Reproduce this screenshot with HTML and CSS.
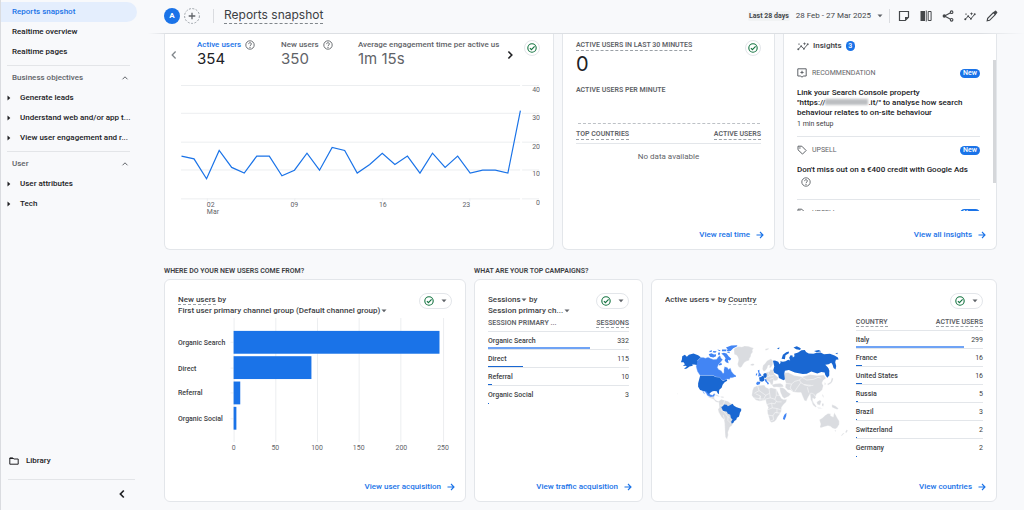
FILE: index.html
```html
<!DOCTYPE html>
<html lang="en">
<head>
    <meta charset="UTF-8">
    <meta name="viewport" content="width=device-width, initial-scale=1.0">
    <title>Reports snapshot</title>
    <link rel="stylesheet" href="styles.css">
</head>
<body>
    <!-- shared icons -->
    <svg class="sprite" aria-hidden="true">
        <symbol id="i-caret" viewBox="0 0 6 4"><path d="M0.5 0.5h5L3 3.2z" fill="currentColor"/></symbol>
        <symbol id="i-tri" viewBox="0 0 4 6"><path d="M0.5 0.6v4.8L3.3 3z" fill="currentColor"/></symbol>
        <symbol id="i-up" viewBox="0 0 8 8"><path d="M1.5 5.3L4 2.8l2.5 2.5" fill="none" stroke="currentColor"/></symbol>
        <symbol id="i-left" viewBox="0 0 8 10"><path d="M5.6 1.5L2.2 5l3.4 3.5" fill="none" stroke="currentColor" stroke-width="1.3"/></symbol>
        <symbol id="i-right" viewBox="0 0 8 10"><path d="M2.4 1.5L5.8 5 2.4 8.5" fill="none" stroke="currentColor" stroke-width="1.6"/></symbol>
        <symbol id="i-arrow" viewBox="0 0 8 8"><path d="M0.5 4h6.3M4 1l3 3-3 3" fill="none" stroke="currentColor" stroke-width="1.1"/></symbol>
        <symbol id="i-help" viewBox="0 0 10 10"><circle cx="5" cy="5" r="4.2" fill="none" stroke="currentColor" stroke-width="0.9"/><path d="M3.6 4.1c0-1.9 2.8-1.8 2.8-0.1C6.4 5 5 5.1 5 6.1" fill="none" stroke="currentColor" stroke-width="0.9"/><circle cx="5" cy="7.4" r="0.55" fill="currentColor"/></symbol>
        <symbol id="i-check" viewBox="0 0 10 10"><circle cx="5" cy="5" r="4.2" fill="none" stroke="#137340" stroke-width="1.1"/><path d="M2.9 5.2l1.5 1.5 3.2-3.4" fill="none" stroke="#137340" stroke-width="1.1"/></symbol>
        <symbol id="i-insight" viewBox="0 0 12 12"><path d="M1.2 9.3L4.2 6.2l2.7 2.6 3.9-4.6" fill="none" stroke="currentColor" stroke-width="1"/><g fill="currentColor"><circle cx="1.3" cy="9.2" r="1"/><circle cx="4.2" cy="6.2" r="1"/><circle cx="6.9" cy="8.7" r="1"/><circle cx="10.7" cy="4.2" r="1"/><path d="M7.5 2l0.5 1.2 1.2 0.5L8 4.2 7.5 5.4 7 4.2 5.8 3.7 7 3.2zM2 3l0.3 0.8 0.8 0.3-0.8 0.3L2 5.2l-0.3-0.8-0.8-0.3 0.8-0.3z"/></g></symbol>
        <symbol id="i-tag" viewBox="0 0 10 10"><path d="M1 1.2h3.8L9.1 5.5 5.5 9.1 1 4.8z" fill="none" stroke="currentColor" stroke-linejoin="round"/><circle cx="2.9" cy="3" r="0.7" fill="currentColor"/></symbol>
    </svg>

    <div class="app">
        <nav class="sidebar">
            <a href="#" class="nav-item active">Reports snapshot</a>
            <a href="#" class="nav-item">Realtime overview</a>
            <a href="#" class="nav-item">Realtime pages</a>
            <hr>
            <button type="button" class="nav-group">Business objectives <svg class="ico-8"><use href="#i-up"/></svg></button>
            <a href="#" class="nav-item sub"><svg class="tri"><use href="#i-tri"/></svg>Generate leads</a>
            <a href="#" class="nav-item sub"><svg class="tri"><use href="#i-tri"/></svg>Understand web and/or app t...</a>
            <a href="#" class="nav-item sub"><svg class="tri"><use href="#i-tri"/></svg>View user engagement and r...</a>
            <hr>
            <button type="button" class="nav-group">User <svg class="ico-8"><use href="#i-up"/></svg></button>
            <a href="#" class="nav-item sub"><svg class="tri"><use href="#i-tri"/></svg>User attributes</a>
            <a href="#" class="nav-item sub"><svg class="tri"><use href="#i-tri"/></svg>Tech</a>
            <div class="sidebar-bottom">
                <a href="#" class="nav-item library">
                    <svg class="ico-10" viewBox="0 0 10 10"><path d="M0.8 2h3l1 1h4.4v5.2H0.8z" fill="none" stroke="currentColor" stroke-linejoin="round"/><path d="M0.8 1.8h3l1 1.2h-4z" fill="currentColor"/></svg>
                    Library
                </a>
                <hr>
                <button type="button" class="collapse" aria-label="Collapse menu"><svg viewBox="0 0 8 10"><path d="M5.8 1.5L2.4 5l3.4 3.5" fill="none" stroke="currentColor" stroke-width="1.7"/></svg></button>
            </div>
        </nav>

        <main class="main">
            <header class="topbar">
                <span class="avatar">A</span>
                <button type="button" class="add" aria-label="Add comparison">
                    <svg viewBox="0 0 16 16"><circle cx="8" cy="8" r="7.4" fill="none" stroke="#9aa0a6" stroke-dasharray="2 1.5"/><path d="M8 4.7v6.6M4.7 8h6.6" stroke="#5f6368" stroke-width="1.3"/></svg>
                </button>
                <span class="sep"></span>
                <h1>Reports snapshot</h1>
                <div class="tools">
                    <button type="button" class="date">
                        <span class="range-tag">Last 28 days</span>
                        28 Feb - 27 Mar 2025
                        <svg class="caret"><use href="#i-caret"/></svg>
                    </button>
                    <span class="sep"></span>
                    <button type="button" aria-label="Notes"><svg viewBox="0 0 12 12"><path d="M1.5 1.5h9v5.8l-3.2 3.2H1.5z" fill="none" stroke="currentColor" stroke-width="1.2"/><path d="M7 10.5V7h3.7z" fill="currentColor"/></svg></button>
                    <button type="button" aria-label="Compare"><svg viewBox="0 0 12 12"><path d="M0.5 1h4.5v10H0.5zM5.8 0.5h0.9v11h-0.9z" fill="currentColor"/><path d="M8.2 1.5h2.9v9H8.2z" fill="none" stroke="currentColor"/></svg></button>
                    <button type="button" aria-label="Share"><svg viewBox="0 0 12 12"><path d="M9.5 2.2L2.5 6l7 3.8" fill="none" stroke="currentColor" stroke-width="1.1"/><g fill="#f8f9fb" stroke="currentColor" stroke-width="1.1"><circle cx="9.6" cy="2.2" r="1.3"/><circle cx="9.6" cy="9.8" r="1.3"/></g><circle cx="2.3" cy="6" r="1.7" fill="currentColor"/></svg></button>
                    <button type="button" aria-label="Insights"><svg><use href="#i-insight"/></svg></button>
                    <button type="button" aria-label="Edit"><svg viewBox="0 0 12 12"><path d="M1.2 10.8l0.5-2.4 5.7-5.7 1.9 1.9-5.7 5.7z" fill="none" stroke="currentColor" stroke-width="1.2"/><path d="M7.2 2.4L9 0.8q0.5-0.4 1 0l1.2 1.2q0.4 0.5 0 1L9.5 4.8z" fill="currentColor"/></svg></button>
                </div>
            </header>

            <section class="row row-top">
                <article class="card cut overview">
                    <div class="metrics">
                        <button type="button" class="step prev" aria-label="Previous"><svg><use href="#i-left"/></svg></button>
                        <div class="metric selected">
                            <span class="metric-name">Active users <svg class="ico-10"><use href="#i-help"/></svg></span>
                            <span class="metric-value">354</span>
                        </div>
                        <div class="metric">
                            <span class="metric-name">New users <svg class="ico-10"><use href="#i-help"/></svg></span>
                            <span class="metric-value">350</span>
                        </div>
                        <div class="metric last">
                            <span class="metric-name">Average engagement time per active us</span>
                            <span class="metric-value">1m 15s</span>
                        </div>
                        <button type="button" class="step next" aria-label="Next"><svg><use href="#i-right"/></svg></button>
                        <button type="button" class="status" aria-label="Data quality"><svg class="ico-10"><use href="#i-check"/></svg></button>
                    </div>
                    <svg class="chart" viewBox="177 80 364 138">
                        <path class="grid" d="M180 85.5h341m2 0h17M180 113.5h341m2 0h17M180 142.5h341m2 0h17M180 170.5h341m2 0h17M180 199.5h341m2 0h17M206.5 199v3M294.5 199v3M382.5 199v3M470.5 199v3"/>
                        <polyline class="line" points="180.5,156.5 193.1,159.3 205.7,179.3 218.4,150.8 231,167.9 243.6,173.6 256.2,156.5 268.8,156.5 281.5,176.4 294.1,170.7 306.7,153.6 319.3,170.7 332,147.9 344.6,150.8 357.2,173.6 369.8,165 382.4,153.6 395.1,165 407.7,156.5 420.3,173.6 432.9,153.6 445.6,167.9 458.2,156.5 470.8,173.6 483.4,170.7 496,170.7 508.7,173.6 521.3,110.9"/>
                        <g class="tick" text-anchor="end">
                            <text x="541" y="92">40</text>
                            <text x="541" y="120">30</text>
                            <text x="541" y="149">20</text>
                            <text x="541" y="177">10</text>
                            <text x="541" y="206">0</text>
                        </g>
                        <g class="tick">
                            <text x="206" y="208">02</text>
                            <text x="206" y="215">Mar</text>
                            <text x="290" y="208">09</text>
                            <text x="379" y="208">16</text>
                            <text x="463" y="208">23</text>
                        </g>
                    </svg>
                </article>

                <article class="card cut realtime">
                    <div class="card-head">
                        <h2 class="caps dashed">Active users in last 30 minutes</h2>
                        <button type="button" class="status" aria-label="Data quality"><svg class="ico-10"><use href="#i-check"/></svg></button>
                    </div>
                    <p class="big">0</p>
                    <h3 class="caps">Active users per minute</h3>
                    <div class="minutes"></div>
                    <div class="list-head">
                        <span class="caps dashed">Top countries</span>
                        <span class="caps dashed">Active users</span>
                    </div>
                    <p class="empty">No data available</p>
                    <a href="#" class="more">View real time <svg class="ico-8"><use href="#i-arrow"/></svg></a>
                </article>

                <article class="card cut insights">
                    <h2 class="insights-title"><svg class="ico-12"><use href="#i-insight"/></svg> Insights <span class="count">3</span></h2>
                    <div class="feed">
                        <div class="insight">
                            <div class="insight-type">
                                <svg class="ico-10" viewBox="0 0 10 10"><path d="M0.8 0.8h8.4v7.2H6.2L5 9.3 3.8 8h-3z" fill="none" stroke="currentColor" stroke-linejoin="round"/><path d="M5 2.2l0.6 1.6 1.6 0.6-1.6 0.6L5 6.6l-0.6-1.6-1.6-0.6 1.6-0.6z" fill="currentColor"/></svg>
                                RECOMMENDATION <span class="new">New</span>
                            </div>
                            <p class="insight-text">Link your Search Console property<br>"https://<span class="redacted"></span>.it/" to analyse how search behaviour relates to on-site behaviour</p>
                            <p class="insight-note">1 min setup</p>
                        </div>
                        <div class="insight">
                            <div class="insight-type"><svg class="ico-10"><use href="#i-tag"/></svg> UPSELL <span class="new">New</span></div>
                            <p class="insight-text">Don't miss out on a €400 credit with Google Ads</p>
                            <svg class="ico-10 insight-help"><use href="#i-help"/></svg>
                        </div>
                        <div class="insight">
                            <div class="insight-type"><svg class="ico-10"><use href="#i-tag"/></svg> UPSELL <span class="new">New</span></div>
                        </div>
                        <span class="scrollbar"></span>
                    </div>
                    <a href="#" class="more">View all insights <svg class="ico-8"><use href="#i-arrow"/></svg></a>
                </article>
            </section>

            <section class="row row-bottom">
                <h2 class="section-title">Where do your new users come from?</h2>
                <h2 class="section-title">What are your top campaigns?</h2>
                <span></span>

                <article class="card">
                    <div class="card-head">
                        <div class="card-title">
                            <div><span class="dashed">New users</span> by</div>
                            <label class="picker"><select aria-label="Dimension"><option>First user primary channel group (Default channel group)</option></select><svg class="caret"><use href="#i-caret"/></svg></label>
                        </div>
                        <button type="button" class="status wide" aria-label="Data quality"><svg class="ico-10"><use href="#i-check"/></svg><svg class="caret"><use href="#i-caret"/></svg></button>
                    </div>
                    <svg class="chart" viewBox="177 316 276 138">
                        <path class="grid" d="M233.5 318v125M275.5 318v125M317.5 318v125M359.5 318v125M401.5 318v125M444.5 318v125M230 342.5h3M230 368.5h3M230 393.5h3M230 419.5h3"/>
                        <g class="bar">
                            <rect x="233" y="331" width="207.4" height="23"/>
                            <rect x="233" y="356.5" width="78.4" height="23"/>
                            <rect x="233" y="382" width="6.7" height="23"/>
                            <rect x="233" y="407.5" width="2.8" height="23"/>
                        </g>
                        <g class="bar-label">
                            <text x="177" y="345">Organic Search</text>
                            <text x="177" y="371">Direct</text>
                            <text x="177" y="396">Referral</text>
                            <text x="177" y="422">Organic Social</text>
                        </g>
                        <g class="tick" text-anchor="middle">
                            <text x="233" y="451">0</text>
                            <text x="275" y="451">50</text>
                            <text x="317" y="451">100</text>
                            <text x="359" y="451">150</text>
                            <text x="402" y="451">200</text>
                            <text x="444" y="451">250</text>
                        </g>
                    </svg>
                    <a href="#" class="more">View user acquisition <svg class="ico-8"><use href="#i-arrow"/></svg></a>
                </article>

                <article class="card">
                    <div class="card-head">
                        <div class="card-title">
                            <div><label class="picker"><select aria-label="Metric"><option>Sessions</option></select><svg class="caret"><use href="#i-caret"/></svg></label> by</div>
                            <label class="picker"><select aria-label="Dimension"><option>Session primary ch...</option></select><svg class="caret"><use href="#i-caret"/></svg></label>
                        </div>
                        <button type="button" class="status wide" aria-label="Data quality"><svg class="ico-10"><use href="#i-check"/></svg><svg class="caret"><use href="#i-caret"/></svg></button>
                    </div>
                    <table class="data">
                        <thead><tr><th>Session primary ...</th><th><span class="dashed">Sessions</span></th></tr></thead>
                        <tbody>
                            <tr><td>Organic Search<i class="meter soft" style="width: 72%"></i></td><td>332</td></tr>
                            <tr><td>Direct<i class="meter" style="width: 25%"></i></td><td>115</td></tr>
                            <tr><td>Referral<i class="meter" style="width: 2.5%"></i></td><td>10</td></tr>
                            <tr><td>Organic Social<i class="meter" style="width: 0.7%"></i></td><td>3</td></tr>
                        </tbody>
                    </table>
                    <a href="#" class="more">View traffic acquisition <svg class="ico-8"><use href="#i-arrow"/></svg></a>
                </article>

                <article class="card">
                    <div class="card-head">
                        <div class="card-title">
                            <div><label class="picker"><select aria-label="Metric"><option>Active users</option></select><svg class="caret"><use href="#i-caret"/></svg></label> by <span class="dashed">Country</span></div>
                        </div>
                        <button type="button" class="status wide" aria-label="Data quality"><svg class="ico-10"><use href="#i-check"/></svg><svg class="caret"><use href="#i-caret"/></svg></button>
                    </div>
                    <div class="geo">
                        <svg class="map" viewBox="-18 0 552 345" role="img" aria-label="Active users by country">
                            <!-- countries without data -->
                            <g fill="#dadce0" stroke="#fff" stroke-width="1">
                                <path d="M190 48l6-4 9-3 9 1 8-3 12 1 8 3 8 2-4 6 1 6-5 7-1 7-4 6-1 6-8 2-6 4-4 5-4 8-5 3-5-3-3-8 2-8 1-6-2-7-3-5-8-4z"/>
                                <path d="M240 94l8-2 4 3-4 4-7-1z"/>
                                <path d="M112 190l10 4 8-2 2 8 8 5 8 1-3 4-9-2-8-8-14-5zM130 184l10 3 8 5-6 0-10-5zM150 192l8 0 2 4-9-1z"/>
                                <path d="M144 206l8-6 6 2 14 4 8 6 8 4 6 6 18 8-4 14-8 10-2 8-10 8-4 10-6 4-2 6-4 10 1 8-3 11 4 2-6-1-4-7-1-16-1-24-2-12-8-8-8-14-2-8 4-6z"/>
                                <path d="M276 108l2-10 6-6 6-8 12-6 6 6-1 12-5 8-5 2 1-9-5 1-2 8-6 8-4 2-4-4z"/>
                                <path d="M280 126l10-8 8-2 2-6 10 2 2 12 12 10-2 8-6 2-6 0-2 8 0 6-6-2-4-8-8-4-6-8z"/>
                                <path d="M304 156l12-3 14-1 8 4 2 6-12 2-10-1-8 1z"/>
                                <path d="M250 164l10-5 12-1 10-1 4 7 10 4 6-3 16 4 4 8 6 12 6 9 6 3 10-1-2 8-8 8-6 8-1 12-5 10-6 8-4 8-6 6-8 2-5-3-3-12-4-12-1-10 3-8-6-12-2-10-6 0-12 3-12-4-8-8-4-6 2-14z"/>
                                <path d="M328 164l10 1 6 4 8 9 10 6-6 7-14 7-6-6-6-14z"/>
                                <path d="M340 132l-2-6 6-6 10-1 18 9 24 4 24-7 20 3 22-1 6 10-8 6-4 8 4 8-3 12-8 8-9 5-3 8-5-6-7-4-6 4-6 10-4 10-6-2-6-14-4-10-10 0-14-2-8-6-8 0-8-8 2-14z"/>
                                <path d="M420 182l8 0 4 4 6 8-4 6-6-4 0 8 4 8-4 0-6-10z"/>
                                <path d="M424 206l8 6 8 10-3 2-8-6zM440 208l10-6 4 4-4 12-8-2zM440 224l12 2 6 2-12 0zM456 212l6 2-2 8-4-2zM486 216l10 4 10 8-4 3-8-3-8-4zM456 184l4 4 2 8-4-4z"/>
                                <path d="M486 134l4 4-2 8-4 6-10 6-2-4 10-6zM464 148l4 6-4 4z"/>
                                <path d="M448 262l10-6 8-8 8-5 8 1 0 6 8 4 3-14 5 8 4 8 6 10 0 10-6 10-6 4-8-2-6-6-8-2-14 4-8 3-2-4 2-8z"/>
                                <path d="M494 294l5 0-2 5zM530 292l4 2-4 8-4-2zM524 302l-8 8-3 0 7-8z"/>
                                <path d="M284 48l12-3-2 5-8 3zM18 182l4 2-2 1z"/>
                            </g>
                            <g fill="none" stroke="#fff" stroke-width="1.5">
                                <path d="M262 160l4 14-14 8M266 174l20 14 12-6-2-14M286 188l-6 12-30-4M298 182l2 14-16 4 2 12M318 170v18h14M318 188l-4 12-14-4M314 200l6 8 14 0M290 216l14-4 10 2 4-8M304 212l2 14-14 6M306 226l14 2 12 4M292 248l16 2 6-10 16 2M308 250l2 12-10 4M320 228v14M270 190l-2 20M256 184l14 6-2 8"/>
                                <path d="M344 152l20 2 10-8 14-4 8-8M388 142l4 8 10 6 14 4 14-2M392 150l-10 14-8 12M364 154l-4 12 8 10M402 156l20 2M396 134l14 8 20-2 14-6 10 2M412 164l4 16M148 218l10 0 4-14M150 232l10 6 10 12 8 8M162 262l-4-14M172 252l0 12 10 10"/>
                                <path d="M292 116l6 14-12 4M298 130l12-2M298 140l12-4M310 140v10"/>
                            </g>
                            <!-- few users -->
                            <g fill="#4285f4" stroke="#a8c7fa" stroke-width="1">
                                <path d="M90 74l8 0 6 2 8-3 8 4 8 3 10-1 4-6 6-5 3 8 5 4-6 8-6 6-4 10 4 6 8 4 5 8 3-2 0-10 2-8 8 2 4 6 5-4 4 10 6 8 4 8-8 3-6 0-2 5-8-1-9 5-8-3-4-7-14-2-6-4H88l-8-12-4-14 2-16z"/>
                                <path d="M96 165l12 3 6 8 4 10 8 2 4-5 3 2-3 7-10 1-10-4-4-8-8-8-2 0 6 11-3-2-6-12z"/>
                            </g>
                            <g fill="#4285f4">
                                <path d="M114 64l8-3 8 4 6-1 0 6-8 4-10-2zM116 54l8-2 0 4-7 2zM128 54l10 1-4 5-8-2zM142 60l6-1 0 6-5 2zM140 50l10 2-4 3zM152 62l8-2 8 2 6 8 8 8-4 5-6-2 2 10-8-3-4-6 3-6-6-8zM154 50l14 0-2 5-12 0zM166 44l16-6 18-1 0 3-12 6-8 8-12 1 3-6zM144 94l8-4 2 6-8 2zM188 124l8 4 0 5-8-2zM168 58l8-2 2 5z"/>
                                <path d="M340 252l3-6 6-5-1 10-5 12-5-3zM282 139l6 1 2 6 6 6-3 4-4-6-5-5zM260 147l10 0-2 8-8 2-3-4zM262 113l5-2 0 8 5 6 1 5-10 1 2-8zM257 122l4 0-2 6-3 0z"/>
                            </g>
                            <!-- most users -->
                            <g fill="#1967d2">
                                <path d="M34 70l8-4 6 6 6-6 14-4 14 5 8 6-10 10-2 14-8-2-6 0 2 4-10 2-8 6-6 2-2-2 8-6-4-2-8 1 6-6-4-6-8 0 3-8z"/>
                                <path d="M88 129h40l6 4 14 1 4 7 6 4 10-5 2 4-8 5-6 7-3 9-7 6-1 7 0 7-4-3-3-6-8-1-6 2-6 4-4 3-8-9-8 0-10-3-6-10 0-10z"/>
                                <path d="M152 224l6-4 2-4 8 1 4 4 6-3 8-4 4 6 8 4 14 5 0 6-4 6-1 6-2 6-6 3-2 6-6 4-3 6-5 1-1-6 4-6-5-4-2-10-8-4-2-5-12-3z"/>
                                <path d="M266 134l6-1 4-4 6 5-1 10-6 3-7-2zM279 124l5-3 5 2 0 8-4 5-6-3z"/>
                                <path d="M308 84l6-1 10 4 4 7 3-4-1-5 8 2 8-2 8-4 6 2-3-8 4-8 6 1 1 6 5-4-1-7 12-4 10-7 10-1 4 6 8 5 14 1 10-3 12-1 10 5 18-1 14 5 10 6 2 6-8 1-2 7 3 12-2 10-6-4-3-10-4-6-8 4-10 2 8 8 4 10 0 14-6 7-6-8-2-8-10-1-12 4-18-6-14 7-12 1-24-5-18-7-12 2-2 10 2 16-4 3-14-7-2-10-12-6-3-8 3-11z"/>
                                <path d="M334 78l4-12 10-8 8-2 0 5-10 6-2 12zM320 46l8-2-2 5zM370 44l10-4 12 6-2 5-12-2zM432 54l14-3 8 4-14 3zM496 62l8-2-2 4zM474 104l4 10-2 10z"/>
                            </g>
                        </svg>
                        <table class="data">
                            <thead><tr><th><span class="dashed">Country</span></th><th><span class="dashed">Active users</span></th></tr></thead>
                            <tbody>
                                <tr><td>Italy<i class="meter soft" style="width: 85%"></i></td><td>299</td></tr>
                                <tr><td>France<i class="meter" style="width: 5%"></i></td><td>16</td></tr>
                                <tr><td>United States<i class="meter" style="width: 5%"></i></td><td>16</td></tr>
                                <tr><td>Russia<i class="meter" style="width: 1.5%"></i></td><td>5</td></tr>
                                <tr><td>Brazil<i class="meter" style="width: 1%"></i></td><td>3</td></tr>
                                <tr><td>Switzerland<i class="meter" style="width: 0.8%"></i></td><td>2</td></tr>
                                <tr><td>Germany<i class="meter" style="width: 0.8%"></i></td><td>2</td></tr>
                            </tbody>
                        </table>
                    </div>
                    <a href="#" class="more">View countries <svg class="ico-8"><use href="#i-arrow"/></svg></a>
                </article>
            </section>
        </main>
    </div>
</body>
</html>
```

FILE: styles.css
```css
* {
    box-sizing: border-box;
}

body {
    margin: 0;
    background-color: #f8f9fb;
    color: #3c4043;
    font-family: Roboto, "Liberation Sans", sans-serif;
    font-size: 8px;
    line-height: 10px;
}

h1, h2, h3, p {
    margin: 0;
    font-weight: 500;
    font-size: inherit;
}

a {
    color: inherit;
    text-decoration: none;
}

button {
    padding: 0;
    border: none;
    background: none;
    color: inherit;
    font: inherit;
    cursor: pointer;
}

svg {
    display: block;
    flex: none;
}

.sprite {
    position: absolute;
    width: 0;
    height: 0;
}

.ico-8 { width: 8px; height: 8px; }
.ico-10 { width: 10px; height: 10px; }
.ico-12 { width: 12px; height: 12px; }
.tri { width: 4px; height: 6px; }
.caret { width: 6px; height: 4px; color: #5f6368; }

.app {
    display: flex;
    min-height: 100vh;
}

/* sidebar */
.sidebar {
    display: flex;
    flex-direction: column;
    flex: none;
    width: 137px;
    padding: 2px 0 6px;
    border-left: 1px solid #dadce0;
    font-weight: 500;
    color: #202124;
}

.sidebar hr {
    width: 123px;
    margin: 3px 0 2px 6px;
    border: none;
    border-top: 1px solid #e3e5e8;
}

.nav-item {
    display: flex;
    align-items: center;
    height: 20px;
    padding-left: 11px;
    white-space: nowrap;
}

.nav-item.active {
    border-radius: 0 10px 10px 0;
    background-color: #e4eefd;
    color: #1a73e8;
}

.nav-item.sub {
    gap: 9px;
    padding-left: 6px;
}

.nav-group {
    display: flex;
    align-items: center;
    justify-content: space-between;
    height: 20px;
    padding: 0 8px 0 11px;
    color: #5f6368;
}

.sidebar-bottom {
    margin-top: auto;
}

.sidebar-bottom hr {
    width: 127px;
    margin: 8px 0 4px 7px;
}

.nav-item.library {
    gap: 7px;
    padding-left: 8px;
}

.collapse {
    display: block;
    height: 20px;
    margin: 0 11px 0 auto;
}

.collapse svg {
    width: 8px;
    height: 10px;
}

/* top bar */
.main {
    flex: 1;
    min-width: 0;
}

.topbar {
    display: flex;
    align-items: center;
    height: 34px;
    padding: 0 26px 2px 27px;
    border-bottom: 1px solid;
    border-image: linear-gradient(to right, transparent 12px, #dcdfe3 30px, #dcdfe3 95%, transparent) 1;
}

.avatar {
    width: 16px;
    height: 16px;
    border-radius: 50%;
    background-color: #1a73e8;
    color: #fff;
    font-weight: 700;
    line-height: 16px;
    text-align: center;
}

.add {
    margin-left: 4px;
}

.add svg {
    width: 16px;
    height: 16px;
}

.sep {
    width: 1px;
    height: 14px;
    background-color: #dadce0;
}

.add + .sep {
    margin: 0 10px 0 13px;
}

.topbar h1 {
    border-bottom: 1px dashed #80868b;
    font-family: Inter, "Open Sans", sans-serif;
    font-size: 12px;
    font-weight: 400;
    line-height: 16px;
}

.tools {
    display: flex;
    align-items: center;
    gap: 10px;
    margin-left: auto;
    color: #44474a;
}

.tools > button > svg:not(.caret) {
    width: 12px;
    height: 12px;
}

.date {
    display: flex;
    align-items: center;
    gap: 6px;
}

.tools .sep {
    margin: 0 -2px 0 -4px;
}

.range-tag {
    padding: 0 1px;
    border-radius: 2px;
    background-color: #f1f3f4;
    font-size: 7px;
    font-weight: 700;
}

/* cards */
.row {
    display: grid;
    column-gap: 8px;
    padding: 0 27px;
}

.row-top {
    grid-template-columns: 390fr 213fr 214fr;
}

.row-bottom {
    grid-template-columns: 302fr 169fr 346fr;
    padding-top: 16px;
    padding-bottom: 8px;
}

.card {
    display: flex;
    flex-direction: column;
    min-width: 0;
    min-height: 223px;
    padding: 14px 13px 8px;
    border: 1px solid #e3e6ea;
    border-radius: 6px;
    background-color: #fff;
}

.card.cut {
    min-height: 216px;
    padding-top: 6px;
    border-top: none;
    border-radius: 0 0 6px 6px;
}

.section-title {
    padding-bottom: 3px;
    font-size: 7px;
    font-weight: 600;
    text-transform: uppercase;
}

.card-head {
    display: flex;
    justify-content: space-between;
    align-items: flex-start;
}

.card-title {
    font-weight: 500;
    line-height: 11px;
    white-space: nowrap;
}

.picker {
    display: inline-flex;
    align-items: center;
}

.picker select {
    padding: 0;
    border: none;
    background: none;
    appearance: none;
    color: inherit;
    font: inherit;
    line-height: 11px;
}

.dashed {
    border-bottom: 1px dashed #9aa0a6;
}

.caps {
    color: #5f6368;
    font-size: 7px;
    font-weight: 600;
    text-transform: uppercase;
}

.status {
    display: flex;
    align-items: center;
    justify-content: center;
    flex: none;
    width: 16px;
    height: 16px;
    border: 1px solid #e3e6ea;
    border-radius: 8px;
}

.status.wide {
    gap: 7px;
    width: 33px;
    margin-top: -1px;
}

.more {
    display: flex;
    align-items: center;
    gap: 6px;
    margin: auto -3px 0 auto;
    color: #1a73e8;
    font-weight: 500;
    line-height: 12px;
}

/* charts */
.chart {
    width: 100%;
    height: auto;
}

.grid {
    fill: none;
    stroke: #eceef0;
}

.line {
    fill: none;
    stroke: #1a73e8;
    stroke-width: 1.2px;
}

.bar {
    fill: #1a73e8;
}

.tick {
    fill: #5f6368;
    font-size: 7px;
}

.bar-label {
    fill: #3c4043;
    font-size: 7px;
    font-weight: 500;
}

/* overview card */
.metrics {
    display: flex;
    height: 38px;
    margin-bottom: 2px;
}

.step {
    width: 8px;
    height: 30px;
}

.step svg {
    width: 8px;
    height: 10px;
}

.prev {
    margin: 0 19px 0 -8px;
    color: #80868b;
}

.next {
    margin: 0 10px 0 4px;
    color: #202124;
}

.metric {
    flex: none;
    width: 84px;
    color: #5f6368;
}

.metric:nth-child(3) {
    width: 77px;
}

.metric.last {
    flex: 1;
    width: auto;
    min-width: 0;
}

.metric-name {
    display: flex;
    align-items: center;
    gap: 4px;
    height: 9px;
    font-weight: 500;
    white-space: nowrap;
}

.selected .metric-name {
    color: #1a73e8;
}

.selected .metric-name svg {
    color: #5f6368;
}

.metric-value {
    display: block;
    font-family: Inter, "Open Sans", sans-serif;
    font-size: 15px;
    line-height: 20px;
}

.selected .metric-value {
    color: #202124;
}

/* realtime card */
.realtime {
    padding-top: 7px;
}

.realtime .card-head {
    height: 14px;
}

.big {
    color: #202124;
    font-family: Inter, "Open Sans", sans-serif;
    font-size: 20px;
    font-weight: 400;
    line-height: 20px;
}

.realtime h3 {
    margin-top: 11px;
}

.minutes {
    height: 29px;
    margin: 0 1px 5px 2px;
    border-bottom: 1px dashed #bdc1c6;
}

.list-head {
    display: flex;
    justify-content: space-between;
    padding-bottom: 3px;
    border-bottom: 1px solid #e3e6ea;
}

.empty {
    margin-top: 8px;
    color: #5f6368;
    font-weight: 400;
    text-align: center;
}

/* insights card */
.insights-title {
    display: flex;
    align-items: center;
    gap: 4px;
    height: 12px;
}

.insights-title svg {
    color: #5f6368;
}

.count {
    width: 9px;
    border-radius: 5px;
    background-color: #1a73e8;
    color: #fff;
    font-size: 7px;
    text-align: center;
}

.feed {
    position: relative;
    height: 151px;
    margin: 8px -13px 0 0;
    padding-right: 16px;
    overflow: hidden;
}

.scrollbar {
    position: absolute;
    top: 0;
    right: 0;
    width: 3px;
    height: 123px;
    background-color: #d5d7da;
}

.insight {
    padding: 7px 0 7px;
    border-bottom: 1px solid #e3e6ea;
}

.insight-type {
    display: flex;
    align-items: center;
    gap: 5px;
    height: 12px;
    color: #5f6368;
    font-size: 7px;
}

.new {
    margin-left: auto;
    padding: 0 3px;
    border-radius: 5px;
    background-color: #1a73e8;
    color: #fff;
    font-weight: 500;
    line-height: 9px;
}

.insight-text {
    margin-top: 9px;
    color: #202124;
}

.insight-note {
    margin-top: 1px;
    font-size: 7px;
    font-weight: 400;
}

.insight-help {
    margin: 2px 0 5px 4px;
    color: #5f6368;
}

.redacted {
    display: inline-block;
    width: 43px;
    height: 6px;
    background-color: #bcbec1;
    filter: blur(1px);
}

/* data tables */
.data {
    width: 100%;
    margin-top: 1px;
    border-collapse: collapse;
    font-size: 7px;
}

.data th {
    height: 14px;
    padding: 2px 0 4px;
    border-bottom: 1px solid #e3e6ea;
    color: #5f6368;
    font-weight: 600;
    line-height: 8px;
    text-align: left;
    text-transform: uppercase;
    vertical-align: top;
    white-space: nowrap;
}

.data tbody tr {
    position: relative;
    border-bottom: 1px solid #e3e6ea;
}

.data tbody tr:last-child {
    border-bottom: none;
}

.data td {
    height: 18px;
    padding: 0;
    font-weight: 500;
}

.data th:last-child,
.data td:last-child {
    text-align: right;
}

.data td:last-child {
    font-weight: 400;
}

/* share of the total, drawn on the row's rule */
.meter {
    position: absolute;
    left: 0;
    bottom: 0;
    height: 1px;
    background-color: #1967d2;
}

.meter.soft {
    height: 2px;
    background-color: #6fa3f5;
}

.geo {
    display: flex;
    gap: 8px;
    align-items: flex-start;
    margin-top: 6px;
}

.map {
    flex: 1;
    min-width: 0;
    margin-top: 18px;
}

.geo .data {
    flex: none;
    width: 40%;
}
```
